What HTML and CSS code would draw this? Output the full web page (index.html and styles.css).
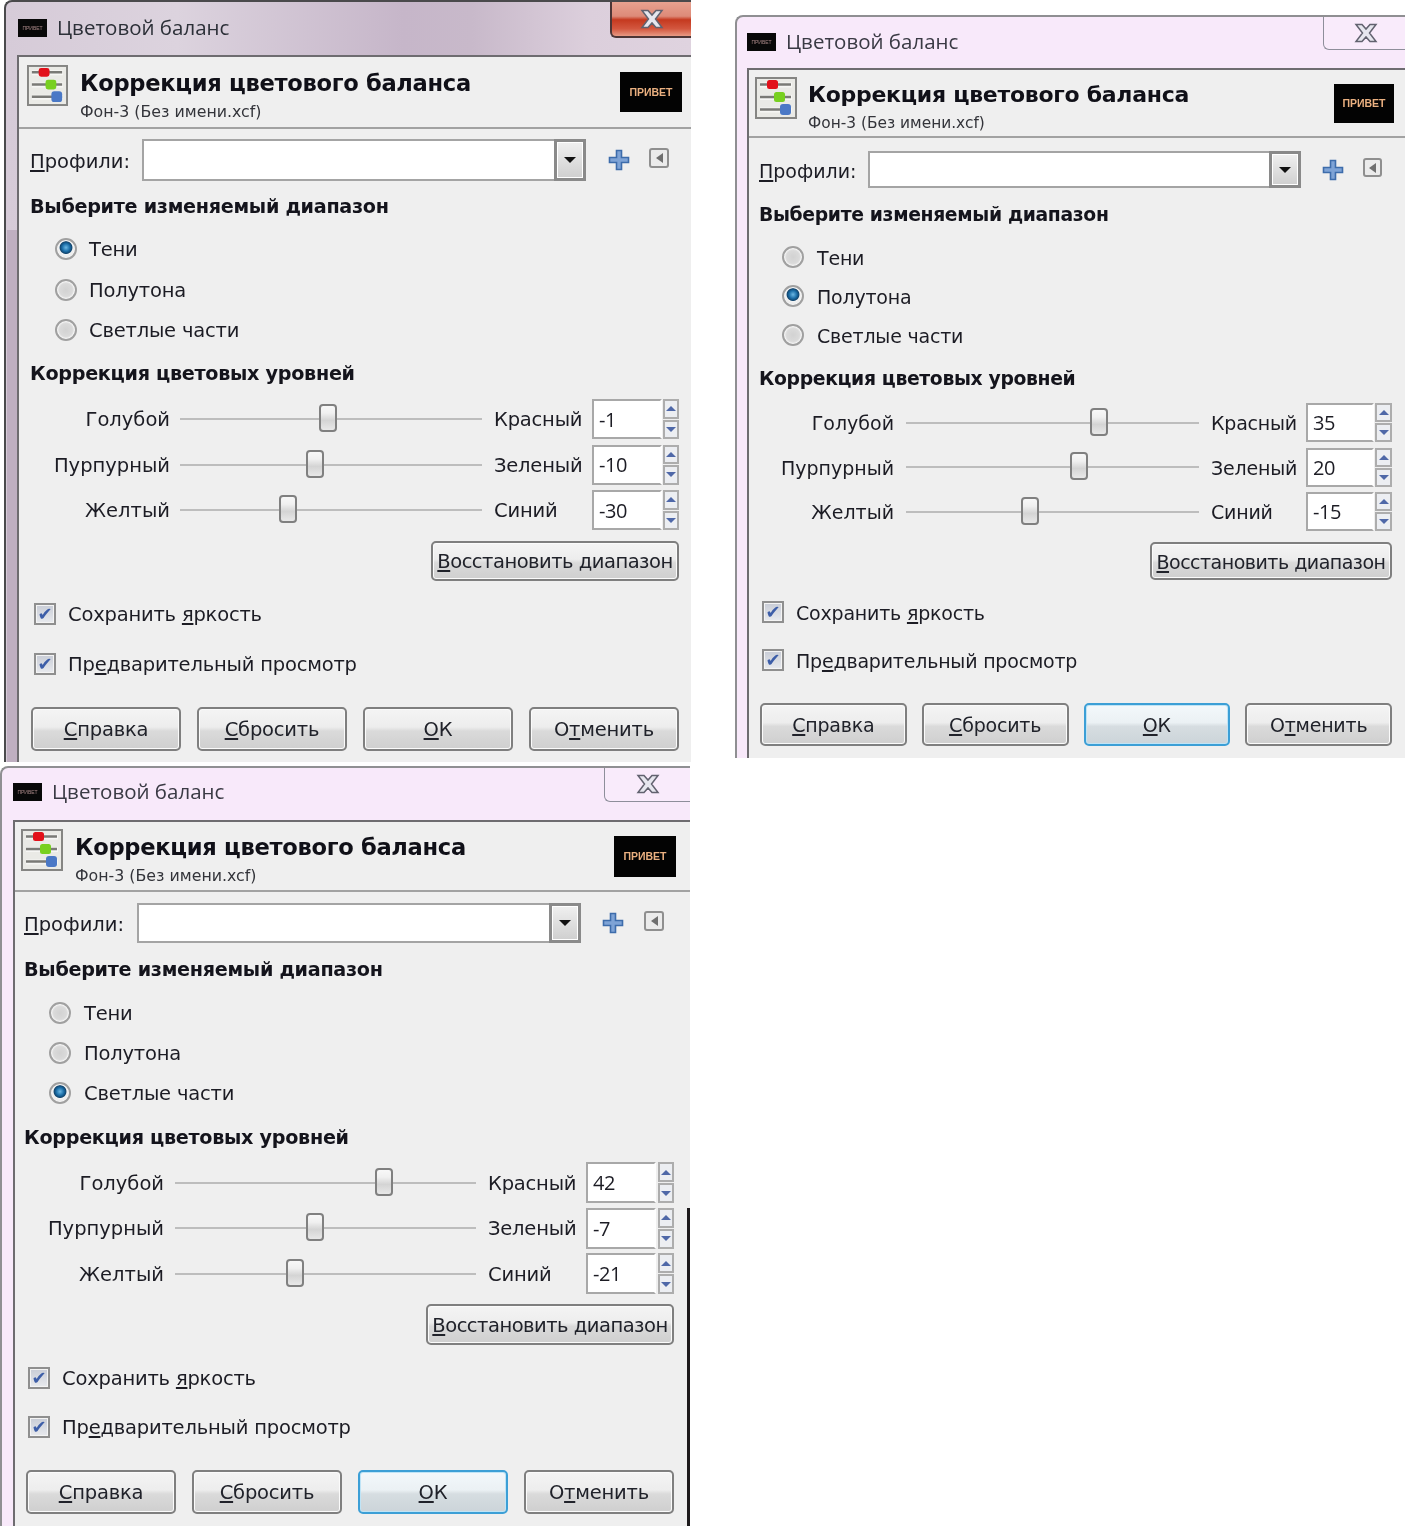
FILE: index.html
```html
<!DOCTYPE html>
<html lang="ru">
<head>
<meta charset="utf-8">
<title>Цветовой баланс</title>
<link rel="stylesheet" href="styles.css">
</head>
<body>
<svg class="defs" width="0" height="0" aria-hidden="true">
  <symbol id="ico-sliders" viewBox="0 0 42 42">
    <rect x="1" y="1" width="40" height="40" fill="#eaeae6" stroke="#858583" stroke-width="2"/>
    <path d="M5 8H37M5 20.500H37M5 33H37" stroke="#f6f6f4" stroke-width="5" fill="none"/>
    <path d="M5 7.500H36M5 20H36M5 32.500H36" stroke="#7a7a76" stroke-width="2.500" fill="none"/>
    <rect x="12" y="3" width="11" height="9" rx="2.500" fill="#e2101a"/>
    <rect x="19" y="15" width="11" height="10" rx="2.500" fill="#78d020"/>
    <rect x="25" y="27" width="11" height="11" rx="3" fill="#4a78c6"/>
  </symbol>
  <symbol id="ico-plus" viewBox="0 0 24 24">
    <path d="M9.500 2.500H14.500V9.500H21.500V14.500H14.500V21.500H9.500V14.500H2.500V9.500H9.500Z" fill="#7ea3d6" stroke="#3d6cab" stroke-width="1.600"/>
  </symbol>
  <symbol id="ico-close" viewBox="0 0 24 20">
    <path d="M2 1.500H8L12 6L16 1.500H22L15.500 10L22 18.500H16L12 14L8 18.500H2L8.500 10Z" fill="#e6e6ee" stroke="#62626f" stroke-width="1.500"/>
  </symbol>
</svg>

<section class="win win-a active">
  <header class="titlebar">
    <span class="appicon"><span class="appicon-text">ПРИВЕТ</span></span>
    <span class="wintitle">Цветовой баланс</span>
  </header>
  <div class="closebtn"><svg class="closeico"><use href="#ico-close"/></svg></div>
  <main class="content">
    <div class="dlg-head">
      <svg class="headicon"><use href="#ico-sliders"/></svg>
      <div class="headtext">
        <div class="dlg-title">Коррекция цветового баланса</div>
        <div class="dlg-sub">Фон-3 (Без имени.xcf)</div>
      </div>
      <div class="logo">ПРИВЕТ</div>
    </div>
    <div class="profiles">
      <label class="prof-label"><u>П</u>рофили:</label>
      <div class="combo"><span class="combo-field"></span><span class="combo-arrow"><i class="tri-down"></i></span></div>
      <svg class="plus"><use href="#ico-plus"/></svg>
      <span class="mini"><i class="tri-left"></i></span>
    </div>
    <h2 class="sect sect-1">Выберите изменяемый диапазон</h2>
    <div class="radios">
      <div class="radio on"><i class="dot"></i><span>Тени</span></div>
      <div class="radio"><i class="dot"></i><span>Полутона</span></div>
      <div class="radio"><i class="dot"></i><span>Светлые части</span></div>
    </div>
    <h2 class="sect sect-2">Коррекция цветовых уровней</h2>
    <div class="sliders">
      <span class="sl-left">Голубой</span><div class="track"><i class="thumb" style="left:49%"></i></div><span class="sl-right">Красный</span><span class="spin">-1</span><span class="spinbtns"><i class="up"></i><i class="down"></i></span>
      <span class="sl-left">Пурпурный</span><div class="track"><i class="thumb" style="left:44.700%"></i></div><span class="sl-right">Зеленый</span><span class="spin">-10</span><span class="spinbtns"><i class="up"></i><i class="down"></i></span>
      <span class="sl-left">Желтый</span><div class="track"><i class="thumb" style="left:35.800%"></i></div><span class="sl-right">Синий</span><span class="spin">-30</span><span class="spinbtns"><i class="up"></i><i class="down"></i></span>
    </div>
    <div class="restore-row"><button class="btn restore"><u>В</u>осстановить диапазон</button></div>
    <div class="checks">
      <div class="check"><i class="box">✔</i><span>Сохранить <u>я</u>ркость</span></div>
      <div class="check"><i class="box">✔</i><span>Пр<u>е</u>дварительный просмотр</span></div>
    </div>
    <div class="actions">
      <button class="btn"><u>С</u>правка</button>
      <button class="btn"><u>С</u>бросить</button>
      <button class="btn"><u>О</u>К</button>
      <button class="btn">О<u>т</u>менить</button>
    </div>
  </main>
</section>

<section class="win win-b">
  <header class="titlebar">
    <span class="appicon"><span class="appicon-text">ПРИВЕТ</span></span>
    <span class="wintitle">Цветовой баланс</span>
  </header>
  <div class="closebtn"><svg class="closeico"><use href="#ico-close"/></svg></div>
  <main class="content">
    <div class="dlg-head">
      <svg class="headicon"><use href="#ico-sliders"/></svg>
      <div class="headtext">
        <div class="dlg-title">Коррекция цветового баланса</div>
        <div class="dlg-sub">Фон-3 (Без имени.xcf)</div>
      </div>
      <div class="logo">ПРИВЕТ</div>
    </div>
    <div class="profiles">
      <label class="prof-label"><u>П</u>рофили:</label>
      <div class="combo"><span class="combo-field"></span><span class="combo-arrow"><i class="tri-down"></i></span></div>
      <svg class="plus"><use href="#ico-plus"/></svg>
      <span class="mini"><i class="tri-left"></i></span>
    </div>
    <h2 class="sect sect-1">Выберите изменяемый диапазон</h2>
    <div class="radios">
      <div class="radio"><i class="dot"></i><span>Тени</span></div>
      <div class="radio on"><i class="dot"></i><span>Полутона</span></div>
      <div class="radio"><i class="dot"></i><span>Светлые части</span></div>
    </div>
    <h2 class="sect sect-2">Коррекция цветовых уровней</h2>
    <div class="sliders">
      <span class="sl-left">Голубой</span><div class="track"><i class="thumb" style="left:65.900%"></i></div><span class="sl-right">Красный</span><span class="spin">35</span><span class="spinbtns"><i class="up"></i><i class="down"></i></span>
      <span class="sl-left">Пурпурный</span><div class="track"><i class="thumb" style="left:59%"></i></div><span class="sl-right">Зеленый</span><span class="spin">20</span><span class="spinbtns"><i class="up"></i><i class="down"></i></span>
      <span class="sl-left">Желтый</span><div class="track"><i class="thumb" style="left:42.300%"></i></div><span class="sl-right">Синий</span><span class="spin">-15</span><span class="spinbtns"><i class="up"></i><i class="down"></i></span>
    </div>
    <div class="restore-row"><button class="btn restore"><u>В</u>осстановить диапазон</button></div>
    <div class="checks">
      <div class="check"><i class="box">✔</i><span>Сохранить <u>я</u>ркость</span></div>
      <div class="check"><i class="box">✔</i><span>Пр<u>е</u>дварительный просмотр</span></div>
    </div>
    <div class="actions">
      <button class="btn"><u>С</u>правка</button>
      <button class="btn"><u>С</u>бросить</button>
      <button class="btn focus"><u>О</u>К</button>
      <button class="btn">О<u>т</u>менить</button>
    </div>
  </main>
</section>

<section class="win win-c">
  <header class="titlebar">
    <span class="appicon"><span class="appicon-text">ПРИВЕТ</span></span>
    <span class="wintitle">Цветовой баланс</span>
  </header>
  <div class="closebtn"><svg class="closeico"><use href="#ico-close"/></svg></div>
  <main class="content">
    <div class="dlg-head">
      <svg class="headicon"><use href="#ico-sliders"/></svg>
      <div class="headtext">
        <div class="dlg-title">Коррекция цветового баланса</div>
        <div class="dlg-sub">Фон-3 (Без имени.xcf)</div>
      </div>
      <div class="logo">ПРИВЕТ</div>
    </div>
    <div class="profiles">
      <label class="prof-label"><u>П</u>рофили:</label>
      <div class="combo"><span class="combo-field"></span><span class="combo-arrow"><i class="tri-down"></i></span></div>
      <svg class="plus"><use href="#ico-plus"/></svg>
      <span class="mini"><i class="tri-left"></i></span>
    </div>
    <h2 class="sect sect-1">Выберите изменяемый диапазон</h2>
    <div class="radios">
      <div class="radio"><i class="dot"></i><span>Тени</span></div>
      <div class="radio"><i class="dot"></i><span>Полутона</span></div>
      <div class="radio on"><i class="dot"></i><span>Светлые части</span></div>
    </div>
    <h2 class="sect sect-2">Коррекция цветовых уровней</h2>
    <div class="sliders">
      <span class="sl-left">Голубой</span><div class="track"><i class="thumb" style="left:69.400%"></i></div><span class="sl-right">Красный</span><span class="spin">42</span><span class="spinbtns"><i class="up"></i><i class="down"></i></span>
      <span class="sl-left">Пурпурный</span><div class="track"><i class="thumb" style="left:46.500%"></i></div><span class="sl-right">Зеленый</span><span class="spin">-7</span><span class="spinbtns"><i class="up"></i><i class="down"></i></span>
      <span class="sl-left">Желтый</span><div class="track"><i class="thumb" style="left:39.900%"></i></div><span class="sl-right">Синий</span><span class="spin">-21</span><span class="spinbtns"><i class="up"></i><i class="down"></i></span>
    </div>
    <div class="restore-row"><button class="btn restore"><u>В</u>осстановить диапазон</button></div>
    <div class="checks">
      <div class="check"><i class="box">✔</i><span>Сохранить <u>я</u>ркость</span></div>
      <div class="check"><i class="box">✔</i><span>Пр<u>е</u>дварительный просмотр</span></div>
    </div>
    <div class="actions">
      <button class="btn"><u>С</u>правка</button>
      <button class="btn"><u>С</u>бросить</button>
      <button class="btn focus"><u>О</u>К</button>
      <button class="btn">О<u>т</u>менить</button>
    </div>
  </main>
</section>
</body>
</html>
```

FILE: styles.css
```css
* { box-sizing: border-box; }
html, body { margin: 0; padding: 0; background: #fff; }
body {
  width: 1405px;
  height: 1526px;
  position: relative;
  overflow: hidden;
  font-family: "DejaVu Sans", sans-serif;
  color: #1c1c24;
}
.defs { position: absolute; }
u { text-underline-offset: 2px; text-decoration-thickness: 2px; }

/* windows on the desktop canvas */
.win {
  position: absolute;
  display: flex;
  flex-direction: column;
  overflow: hidden;
  background: #f8e9fa;
  border-top: 2px solid #8f8f92;
  border-left: 2px solid #8f8f92;
  border-top-left-radius: 8px;
  filter: blur(0.4px);
}
.win-a {
  left: 4px; top: 0; width: 687px; height: 762px;
  --frame: 11px; --bar-pl: 12px; --bar: 53px; --bar-pb: 1px; --text-pb: 2px;
  --pl: 11px; --pr: 12px;
  --head: 70px; --head-text: 11px; --sub-gap: 2px; --head-pl: 8px; --icon-w: 41px; --icon-top: 8px;
  --title-gap: 12px; --logo-w: 62px; --logo-h: 40px; --logo-r: 9px;
  --prof-mt: 10px; --prof-h: 42px; --prof-l: 112px; --combo-w: 444px; --plus-ml: 21px; --mini: 20px; --mini-ml: 18px;
  --s1-mt: 10px; --rad-mt: 8px; --rad-h: 40.500px; --rad-ind: 25px; --rad-gap: 12px;
  --s2-mt: 7.500px; --sl-mt: 11px; --sl-h: 40px; --sl-gap: 5.500px;
  --c1: 140px; --c-g1: 10px; --c2: 302px; --c3: 110px; --c4: 70px; --c-g4: 1px; --c5: 16px;
  --re-mt: 11px; --re-h: 40px; --re-w: 248px;
  --ch-mt: 18px; --ch-gap: 20px; --ch-ind: 4px;
  --ac-mt: 28px; --ac-h: 44px; --ac-gap: 16px; --ac-ml: 1px;
  --fs: 19.500px; --ls: -0.2px; --title-fs: 22.600px; --title-ls: -0.3px; --sub-fs: 15.800px; --sect-fs: 19.200px; --sect-ls: -0.3px;
  border-color: #4a4a4c;
  background: linear-gradient(90deg, #d6cbd8 0, #dcd3de 25%, #c6b6c9 58%, #c8b9ca 68%, #dccfdc 85%, #dfd3df 100%);
}
.win-a::before {
  content: "";
  position: absolute;
  left: 1px; top: 228px; bottom: 0;
  width: 10px;
  background: #bfafc1;
}
.win-b {
  left: 735px; top: 15px; width: 670px; height: 743px;
  --frame: 10px; --bar-pl: 10px; --bar: 51px; --bar-pb: 1px; --text-pb: 2px;
  --pl: 10px; --pr: 13px;
  --head: 66px; --head-text: 10px; --sub-gap: 1px; --head-pl: 6px; --icon-w: 42px; --icon-top: 7px;
  --title-gap: 11px; --logo-w: 60px; --logo-h: 39px; --logo-r: 11px;
  --prof-mt: 13px; --prof-h: 37px; --prof-l: 109px; --combo-w: 433px; --plus-ml: 20px; --mini: 19px; --mini-ml: 18px;
  --s1-mt: 11px; --rad-mt: 8.500px; --rad-h: 39px; --rad-ind: 23px; --rad-gap: 13px;
  --s2-mt: 8.500px; --sl-mt: 10px; --sl-h: 39px; --sl-gap: 5.500px;
  --c1: 135px; --c-g1: 12px; --c2: 293px; --c3: 107px; --c4: 68px; --c-g4: 1px; --c5: 17px;
  --re-mt: 11px; --re-h: 38px; --re-w: 242px;
  --ch-mt: 17px; --ch-gap: 18px; --ch-ind: 3px;
  --ac-mt: 28px; --ac-h: 43px; --ac-gap: 15px; --ac-ml: 1px;
  --fs: 19px; --ls: -0.2px; --title-fs: 22px; --title-ls: -0.28px; --sub-fs: 15.400px; --sect-fs: 18.800px; --sect-ls: -0.35px;
}
.win-c {
  left: 0; top: 766px; width: 690px; height: 760px;
  --frame: 11px; --bar-pl: 11px; --bar: 52px; --bar-pb: 4px; --text-pb: 2px;
  --pl: 9px; --pr: 16px;
  --head: 68px; --head-text: 10px; --sub-gap: 2px; --head-pl: 6px; --icon-w: 42px; --icon-top: 7px;
  --title-gap: 12px; --logo-w: 62px; --logo-h: 41px; --logo-r: 14px;
  --prof-mt: 11px; --prof-h: 40px; --prof-l: 113px; --combo-w: 444px; --plus-ml: 20px; --mini: 20px; --mini-ml: 19px;
  --s1-mt: 11px; --rad-mt: 9px; --rad-h: 40px; --rad-ind: 25px; --rad-gap: 13px;
  --s2-mt: 9px; --sl-mt: 10px; --sl-h: 41px; --sl-gap: 4.500px;
  --c1: 140px; --c-g1: 11px; --c2: 301px; --c3: 110px; --c4: 70px; --c-g4: 2px; --c5: 16px;
  --re-mt: 10px; --re-h: 41px; --re-w: 248px;
  --ch-mt: 18px; --ch-gap: 19px; --ch-ind: 4px;
  --ac-mt: 28px; --ac-h: 44px; --ac-gap: 16px; --ac-ml: 2px;
  --fs: 19.500px; --ls: -0.2px; --title-fs: 22.600px; --title-ls: -0.3px; --sub-fs: 15.800px; --sect-fs: 19.200px; --sect-ls: -0.3px;
}
.win-c::after {
  content: "";
  position: absolute;
  right: 0; top: 440px; bottom: 0;
  width: 3px;
  background: #1d1a1c;
}

.titlebar {
  height: var(--bar);
  flex: none;
  display: flex;
  align-items: center;
  gap: 10px;
  padding-left: var(--bar-pl);
  padding-bottom: var(--bar-pb);
}
.appicon {
  width: 29px; height: 18px;
  background: #080808;
  display: flex; align-items: center; justify-content: center;
  overflow: hidden;
}
.appicon-text { color: #a88; font: 5px "Liberation Sans", sans-serif; }
.wintitle { font: 20.500px "Open Sans", sans-serif; color: #3a3a44; padding-bottom: var(--text-pb); }
.active .wintitle { color: #2c3038; }

.closebtn {
  position: absolute;
  top: -2px; right: 0;
  width: 82px; height: 36px;
  border: 1px solid #8e8e9a;
  border-top: 0; border-right: 0;
  border-bottom-left-radius: 6px;
  background: #f9ebfb;
  display: flex; align-items: center; justify-content: center;
}
.win-a .closebtn {
  width: 81px; height: 38px;
  padding-top: 2px;
  padding-left: 1px;
  border: 2px solid #4d3636; border-top: 0; border-right: 0;
  background: linear-gradient(#e9a593 0, #dd8a78 45%, #c5391f 55%, #d3573f 80%, #e89a84 100%);
}
.win-b .closebtn { top: 0; height: 33px; padding-left: 2px; }
.win-c .closebtn { width: 86px; height: 36px; right: 0; }
.closeico { width: 24px; height: 20px; }

.content {
  flex: 1;
  min-height: 0;
  background: #efefef;
  border-top: 2px solid #6e6c70;
  border-left: 2px solid #6e6c70;
  display: flex;
  flex-direction: column;
  margin-left: var(--frame);
  font-size: var(--fs);
  letter-spacing: var(--ls);
  padding-left: var(--pl);
  padding-right: var(--pr);
}
.dlg-head {
  height: calc(var(--head) + 2px);
  flex: none;
  display: flex;
  align-items: center;
  margin-left: calc(0px - var(--pl));
  margin-right: calc(0px - var(--pr));
  padding-left: var(--head-pl);
  padding-right: var(--logo-r);
  border-bottom: 2px solid #a2a2a2;
  gap: var(--title-gap);
}
.headicon {
  width: var(--icon-w); height: var(--icon-w);
  align-self: flex-start;
  margin-top: var(--icon-top);
  flex: none;
}
.headtext { flex: 1; align-self: flex-start; padding-top: var(--head-text); }
.dlg-title { font-weight: 700; font-size: var(--title-fs); letter-spacing: var(--title-ls); line-height: 30px; color: #101018; white-space: nowrap; }
.dlg-sub { font-size: var(--sub-fs); letter-spacing: 0; line-height: 24px; margin-top: var(--sub-gap); color: #33343a; white-space: nowrap; }
.logo {
  width: var(--logo-w); height: var(--logo-h);
  background: #030303;
  color: #eab080;
  font: bold 10.500px/1 "Liberation Sans", sans-serif;
  letter-spacing: 0;
  display: flex; align-items: center; justify-content: center;
}

.profiles {
  display: flex; align-items: center;
  margin-top: var(--prof-mt);
  height: var(--prof-h);
  flex: none;
}
.prof-label { width: var(--prof-l); flex: none; white-space: nowrap; padding-top: 3px; letter-spacing: 0; }
.combo {
  width: var(--combo-w); height: 100%;
  display: flex;
  flex: none;
  border: 2px solid #a4a4a4;
  background: #fff;
}
.combo-field { flex: 1; }
.combo-arrow {
  width: 32px;
  margin: -2px -2px -2px 0;
  border: 3px solid #8a8a8a;
  box-shadow: inset 0 0 0 1px #fff;
  background: linear-gradient(#f0f0f0, #cfcfcf);
  display: flex; align-items: center; justify-content: center;
}
.tri-down { width: 0; height: 0; border: 6.500px solid transparent; border-top: 6.500px solid #111; border-bottom: 0; }
.plus { width: 24px; height: 24px; flex: none; margin-left: var(--plus-ml); }
.mini {
  width: var(--mini); height: var(--mini);
  flex: none;
  margin-left: var(--mini-ml);
  margin-top: -4px;
  border: 2px solid #8f8f8f;
  border-radius: 3px;
  background: #ebebeb;
  display: flex; align-items: center; justify-content: center;
}
.tri-left { width: 0; height: 0; border: 5px solid transparent; border-right: 7px solid #6f6f6f; border-left: 0; }

.sect { font-size: var(--sect-fs); letter-spacing: var(--sect-ls); font-weight: 700; margin: 0; height: 30px; padding-top: 1px; line-height: 30px; flex: none; color: #14141c; white-space: nowrap; }
.sect-1 { margin-top: var(--s1-mt); }
.sect-2 { margin-top: var(--s2-mt); }

.radios { margin-top: var(--rad-mt); flex: none; }
.radio {
  height: var(--rad-h);
  display: flex; align-items: center;
  padding-left: var(--rad-ind);
  gap: var(--rad-gap);
}
.radio span { padding-top: 1px; }
.dot {
  width: 22px; height: 22px;
  flex: none;
  border-radius: 50%;
  border: 2px solid #a0a0a0;
  background: radial-gradient(circle at 50% 50%, #d2d2d2 0, #dadada 50%, #f4f4f4 75%);
  box-shadow: inset 0 0 0 1px #f6f6f6;
}
.radio.on .dot {
  background: radial-gradient(circle at 50% 42%, #6cb8e4 0, #1b6ea8 28%, #12466f 43%, #f2f2f2 50%, #dcdcdc 100%);
}

.sliders {
  margin-top: var(--sl-mt);
  flex: none;
  display: grid;
  grid-template-columns: var(--c1) calc(var(--c2) + var(--c-g1)) var(--c3) var(--c4) calc(var(--c5) + var(--c-g4));
  grid-auto-rows: var(--sl-h);
  row-gap: var(--sl-gap);
  align-items: center;
}
.sl-left { text-align: right; padding-top: 1px; white-space: nowrap; letter-spacing: 0; }
.track {
  position: relative;
  margin-left: var(--c-g1);
  width: var(--c2);
  height: 2px;
  background: #bdbdbd;
}
.thumb {
  position: absolute;
  top: -14px;
  width: 18px; height: 28px;
  margin-left: -9px;
  border: 2px solid #808080;
  border-radius: 4px;
  background: linear-gradient(#f8f8f8 0, #f0f0f0 30%, #d4d4d4 60%, #e8e8e8 100%);
}
.sl-right { padding-left: 12px; padding-top: 1px; white-space: nowrap; }
.spin {
  height: 100%;
  border: 2px solid #a8a8a8;
  border-right-color: #fff;
  background: #fff;
  display: flex; align-items: center;
  padding-left: 5px;
  letter-spacing: -0.4px;
  font: 20px "Open Sans", sans-serif;
}
.spinbtns {
  height: 100%;
  margin-left: var(--c-g4);
  width: var(--c5);
  display: flex; flex-direction: column; gap: 1px;
}
.spinbtns i {
  flex: 1;
  background: #eceef2;
  border: 2px solid #adadad;
  display: flex; align-items: center; justify-content: center;
}
.spinbtns i::before { content: ""; border: 5px solid transparent; }
.spinbtns .up::before { border-bottom: 5px solid #4f68a8; border-top: 0; }
.spinbtns .down::before { border-top: 5px solid #4f68a8; border-bottom: 0; }

.btn {
  font: inherit;
  letter-spacing: inherit;
  color: #20222a;
  border: 2px solid #7f7f7f;
  border-radius: 5px;
  background: linear-gradient(#f4f4f4 0, #ededed 45%, #dadada 55%, #cfcfcf 100%);
  padding: 1px 0 0;
  box-shadow: inset 0 0 0 1px #fbfbfb;
  white-space: nowrap;
}
.btn.focus {
  border-color: #3c9fd6;
  background: linear-gradient(#f3f8fb 0, #ebf1f4 45%, #d6dde1 55%, #ccd4d9 100%);
  box-shadow: inset 0 0 0 1px #bfe4f6;
}
.restore-row { margin-top: var(--re-mt); height: var(--re-h); display: flex; justify-content: flex-end; flex: none; }
.restore { width: var(--re-w); height: 100%; letter-spacing: -0.5px; }

.checks { margin-top: var(--ch-mt); display: flex; flex-direction: column; gap: var(--ch-gap); flex: none; }
.check { height: 30px; display: flex; align-items: center; gap: 12px; padding-left: var(--ch-ind); white-space: nowrap; }
.check span { padding-top: 1px; }
.box {
  width: 22px; height: 22px;
  flex: none;
  border: 2px solid #8f8f8f;
  background: linear-gradient(#c8ccd6, #e8eaee);
  box-shadow: inset 0 0 0 1px #f4f4f4;
  color: #3d5ea8;
  font: normal 18px/18px "DejaVu Sans", sans-serif;
  text-align: center;
}

.actions {
  margin-top: var(--ac-mt);
  margin-left: var(--ac-ml);
  height: var(--ac-h);
  flex: none;
  display: grid;
  grid-template-columns: repeat(4, 1fr);
  gap: var(--ac-gap);
}
```
